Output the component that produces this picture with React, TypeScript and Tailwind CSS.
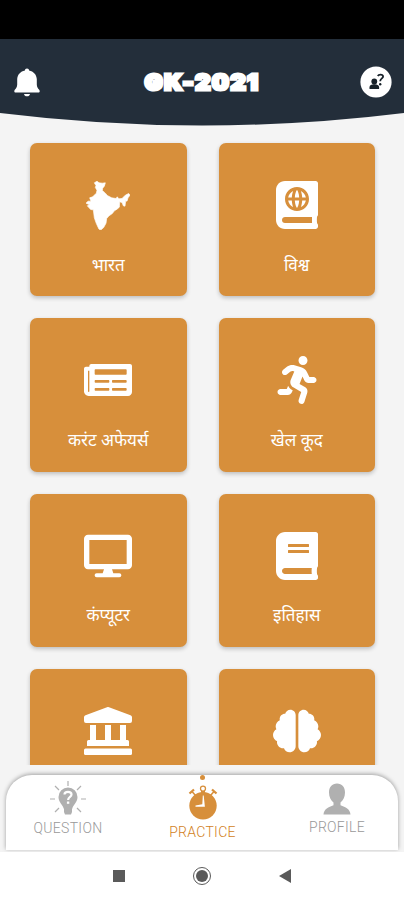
import React from "react";
import { FaAtlas, FaBook, FaBrain, FaDesktop, FaNewspaper, FaRunning } from "react-icons/fa";

const deva = "font-['Noto_Sans_Devanagari','Noto_Sans',Roboto,sans-serif]";

function IndiaMap() {
  return (
    <svg viewBox="198 137 132 146" className="h-[49px] w-[44px]" fill="currentColor">
      <path d="M223 142L231 137L237 142L247 143L256 142L253 152L248 158L247 165L256 173L262 180L275 187L288 189L292 184L296 190L306 189L316 179L326 174L330 179L324 187L321 197L317 196L315 212L310 211L306 201L299 199L298 215L291 221L283 226L277 234L267 241L260 249L258 263L251 276L243 283L237 281L229 264L223 247L220 223L212 222L202 211L209 208L198 203L204 197L213 197L209 187L218 184L229 173L231 164L226 156L228 150Z" stroke="currentColor" strokeWidth="2" strokeLinejoin="round" />
    </svg>
  );
}

function Institution() {
  return (
    <svg viewBox="0 0 48 48" className="size-12" fill="currentColor">
      <path d="M23 .2a2.500 2.500 0 0 1 2 0L46.500 8.300A2.300 2.300 0 0 1 48 10.500V14a2 2 0 0 1-2 2H2a2 2 0 0 1-2-2v-3.500a2.300 2.300 0 0 1 1.500-2.200Z" />
      <path d="M6 18h6v15h9V18h6v15h9V18h6v15h1.500a1.500 1.500 0 0 1 1.500 1.500V39H3v-4.500A1.500 1.500 0 0 1 4.500 33H6Z" />
      <rect y="41.500" width="48" height="6.500" rx="1.500" />
    </svg>
  );
}

function Bell() {
  return (
    <svg viewBox="0 0 26 29" className="h-[29px] w-[26px]" fill="currentColor">
      <path d="M13 0.5c-1.400 0-2 .9-2.100 1.900C6.500 3.200 3.500 6.500 3.200 11v5.500c-.1 2.500-1 3.700-2.400 5.300-.9 1-.6 2.800.8 2.800h22.800c1.400 0 1.700-1.800.8-2.800-1.400-1.600-2.300-2.800-2.400-5.300V11C22.500 6.500 19.500 3.200 15.100 2.400 15 1.400 14.400.5 13 .5Z" />
      <path d="M10 26h6c-.3 1.700-1.300 2.300-3 2.300S10.300 27.700 10 26Z" />
    </svg>
  );
}

function HelpPerson() {
  return (
    <svg viewBox="0 0 32 32" className="size-8">
      <circle cx="16" cy="16" r="15.600" fill="#fff" />
      <g fill="#172129">
        <circle cx="14.300" cy="15.500" r="2.900" />
        <path d="M9.500 23v-1.700c0-2.200 2.700-3 4.800-3s4.800.8 4.800 3V23Z" />
        <circle cx="20.200" cy="18.200" r="1.200" />
      </g>
      <path d="M17.800 10c.8-1.700 5-2 5.300.4.2 1.900-2.900 2.100-2.900 4.800" fill="none" stroke="#172129" strokeWidth="1.800" />
    </svg>
  );
}

function QuestionBulb() {
  return (
    <svg viewBox="0 0 38 36" className="h-9 w-[38px]">
      <path d="M14.500 28.500c0-3-5-6-5-11.500a9.500 9.500 0 0 1 19 0c0 5.500-5 8.500-5 11.500Z" fill="#b0b0b0" />
      <path d="M15 28h8v4l-1 2.500h-6L15 32Z" fill="#b0b0b0" />
      <path d="M19 1v5M1 19h5M32 19h5M6 6l4 4M32 6l-4 4M6 32l4-4M32 32l-4-4" stroke="#b0b0b0" strokeWidth="1.200" fill="none" />
      <path d="M15.500 14.500c0-3.500 7-3.500 7 0 0 2.500-3.400 2.200-3.400 5.500" fill="none" stroke="#fff" strokeWidth="2.200" />
      <path d="M17.900 21.500h2.400v2.300h-2.400Z" fill="#fff" />
    </svg>
  );
}

function Stopwatch() {
  return (
    <svg viewBox="0 0 30 35" className="h-[35px] w-[30px]">
      <circle cx="15" cy="20.700" r="13.700" fill="#d78f3b" />
      <circle cx="15" cy="3.600" r="2.500" fill="none" stroke="#d78f3b" strokeWidth="1.300" />
      <path d="M13 6h4v3h-4Z" fill="#d78f3b" />
      <path d="M1.500 8.500l4.500-4M24 4.500l4.500 4" stroke="#d78f3b" strokeWidth="2.300" />
      <path d="M4 6.500l3.500 4M26 6.500l-3.500 4" stroke="#d78f3b" strokeWidth="1.500" />
      <path d="M14.800 10.500h.9l1.200 11.300H7.500v-1.200l6.800-1.300Z" fill="#fff" />
    </svg>
  );
}

function Person() {
  return (
    <svg viewBox="0 0 28 32" className="h-8 w-7" fill="#b0b0b0">
      <path d="M14 .5c5 0 8 3.500 8 9 0 4.500-2 8-4.500 10v2.800c5 1.700 9.500 3.700 10 9.200H.5c.5-5.500 5-7.500 10-9.200v-2.800C8 17.500 6 14 6 9.500c0-5.500 3-9 8-9Z" />
    </svg>
  );
}

const topics = [
  { label: "भारत", icon: <IndiaMap /> },
  { label: "विश्व", icon: <FaAtlas size={48} /> },
  { label: "करंट अफेयर्स", icon: <FaNewspaper size={48} /> },
  { label: "खेल कूद", icon: <FaRunning size={48} /> },
  { label: "कंप्यूटर", icon: <FaDesktop size={48} /> },
  { label: "इतिहास", icon: <FaBook size={48} /> },
  { label: "", icon: <Institution /> },
  { label: "", icon: <FaBrain size={48} /> },
];

export default function App() {
  return (
    <div className="flex h-[900px] w-[404px] flex-col overflow-hidden bg-[#f4f4f4] font-[Roboto,sans-serif]">
      <div className="h-[39px] shrink-0 bg-black" />
      <header className="grid h-[87px] shrink-0 text-white">
        <svg viewBox="0 0 404 87" className="col-start-1 row-start-1 h-[87px] w-[404px]">
          <path d="M0 0H404V74Q303 86.500 202 86.500T0 74Z" fill="#232e3a" />
        </svg>
        <div className="z-10 col-start-1 row-start-1 flex h-[86px] items-center justify-between pl-[14px] pr-3">
          <Bell />
          <h1 className="ml-[5px] scale-x-[1.120] font-[Inter,sans-serif] text-[21px] leading-none font-black tracking-[1.500px] [-webkit-text-stroke:3px_white]">
            GK-2021
          </h1>
          <HelpPerson />
        </div>
      </header>

      <main className="h-[639px] shrink-0 overflow-hidden pt-[17px]">
        <div className="grid grid-cols-[156.500px_156.500px] gap-x-8 gap-y-[22px] pl-[30px]">
          {topics.map((t, i) => (
            <div key={i} className="flex h-[153.300px] flex-col items-center rounded-[7px] bg-[#d78f3b] pt-[37.500px] text-white shadow-[0_2px_4px_rgba(0,0,0,0.22)]">
              <div className="flex h-[49px] items-center justify-center">{t.icon}</div>
              {t.label && <span className={`mt-6 text-[17px] leading-[26px] whitespace-nowrap ${deva}`}>{t.label}</span>}
            </div>
          ))}
        </div>
      </main>

      <div className="flex h-[87px] shrink-0 flex-col px-[6px] pt-[10px]">
        <nav className="grid h-[75px] grid-cols-[124px_145px_124px] rounded-t-[26px] bg-white text-[14px] leading-4 font-light tracking-[0.3px] shadow-[0_-1px_4px_rgba(0,0,0,0.35)]">
          <div className="flex flex-col items-center pt-[5px] text-[#999]">
            <QuestionBulb />
            <span className="mt-[4px]">QUESTION</span>
          </div>
          <div className="flex flex-col items-center text-[#d27f22]">
            <span className="size-[5px] rounded-full bg-[#d78f3b]" />
            <div className="mt-[5px]"><Stopwatch /></div>
            <span className="mt-[4px]">PRACTICE</span>
          </div>
          <div className="flex flex-col items-center pt-[8px] text-[#999]">
            <Person />
            <span className="mt-[4px]">PROFILE</span>
          </div>
        </nav>
      </div>

      <div className="z-10 grid h-12 shrink-0 grid-cols-3 bg-white">
        <div className="flex items-center justify-end pr-[10px]"><span className="size-3 bg-[#5a5a5a]" /></div>
        <div className="flex items-center justify-center">
          <span className="flex size-[18px] items-center justify-center rounded-full border border-[#5a5a5a]">
            <span className="size-3 rounded-full bg-[#5a5a5a]" />
          </span>
        </div>
        <div className="flex items-center pl-[10px]">
          <svg viewBox="0 0 12 14" className="h-[14px] w-3"><path d="M12 0v14L0 7Z" fill="#5a5a5a" /></svg>
        </div>
      </div>
    </div>
  );
}
